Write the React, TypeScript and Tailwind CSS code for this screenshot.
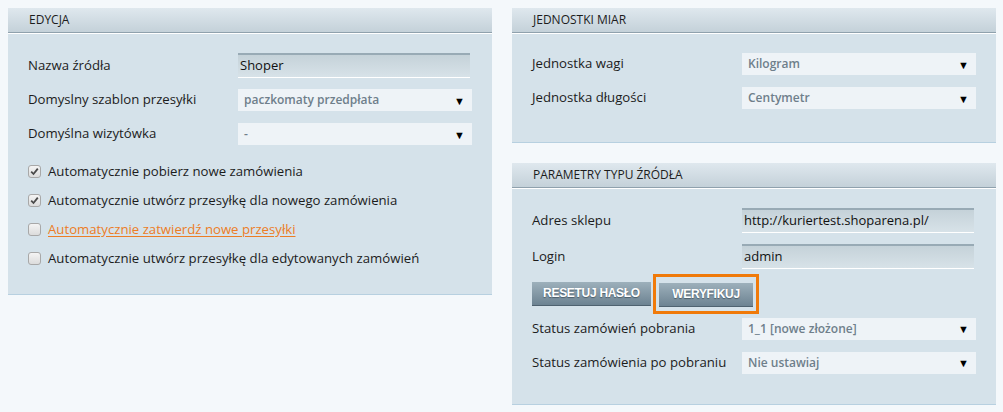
import React from 'react';

const font = { fontFamily: '"Open Sans", "Liberation Sans", sans-serif' };

const Panel: React.FC<{ title: string; className?: string; children: React.ReactNode }> = ({
  title,
  className = '',
  children,
}) => (
  <section className={`bg-[#d5e2ea] border-b border-[#b7d0e0] ${className}`}>
    <div className="h-[25px] flex items-center pl-[21px] bg-gradient-to-b from-[#dfe8ee] to-[#c4d1d9] border-b border-[#8fa1ad] shadow-[0_1px_0_#ffffff]">
      <h2 className="text-[12px] leading-none text-[#1c1c1c] uppercase">{title}</h2>
    </div>
    {children}
  </section>
);

const Row: React.FC<{ label: string; children: React.ReactNode; className?: string }> = ({
  label,
  children,
  className = '',
}) => (
  <div className={`flex items-center ${className}`}>
    <label className="w-[210px] shrink-0 text-[13.2px] text-[#1c1c1c]">{label}</label>
    {children}
  </div>
);

const TextInput: React.FC<{ value: string }> = ({ value }) => (
  <div className="w-[232px] h-[25px] flex items-center pl-[2px] text-[13px] text-[#111] bg-gradient-to-b from-[#c5d2d9] to-[#d7e2e8] border-t-2 border-[#98aab5] border-b border-b-white">
    {value}
  </div>
);

const Select: React.FC<{ value: string }> = ({ value }) => (
  <div className="w-[234px] h-[22px] flex items-center justify-between pl-[6px] pr-[7px] bg-[#eef3f7] text-[12px] font-semibold text-[#6f7f8b]">
    <span>{value}</span>
    <span className="text-[11px] text-black leading-none">▼</span>
  </div>
);

const Checkbox: React.FC<{ checked?: boolean; label: string; link?: boolean }> = ({ checked, label, link }) => (
  <div className="flex items-center h-[29px]">
    <span className="w-[13px] h-[13px] ml-[20px] mr-[7px] rounded-[3px] border border-[#a8a8a8] bg-gradient-to-b from-[#f4f4f4] to-[#dcdcdc] flex items-center justify-center">
      {checked && (
        <svg width="9" height="9" viewBox="0 0 9 9">
          <path d="M1.2 4.6 L3.5 7 L7.8 1.6" fill="none" stroke="#4a4a4a" strokeWidth="1.8" />
        </svg>
      )}
    </span>
    <span
      className={`text-[13.2px] ${link ? 'text-[#ec7d26] underline underline-offset-2' : 'text-[#1c1c1c]'}`}
    >
      {label}
    </span>
  </div>
);

const Button: React.FC<{ children: React.ReactNode; className?: string }> = ({ children, className = '' }) => (
  <button
    className={`h-[24px] whitespace-nowrap font-['Liberation_Sans',sans-serif] text-[12px] tracking-[-0.3px] font-bold text-white uppercase bg-gradient-to-b from-[#9db0bb] to-[#6d8392] border-b border-[#4f6270] [text-shadow:0_1px_1px_#4b5d69] ${className}`}
  >
    {children}
  </button>
);

export default function App() {
  return (
    <div className="min-h-screen bg-[#f4f8fb] pt-[8px] pl-[8px]" style={font}>
      <div className="flex gap-[20px] items-start">
        <Panel title="Edycja" className="w-[484px] h-[287px]">
          <div className="px-[20px] pt-[20px]">
            <Row label="Nazwa źródła">
              <TextInput value="Shoper" />
            </Row>
            <Row label="Domyslny szablon przesyłki" className="mt-[11px]">
              <Select value="paczkomaty przedpłata" />
            </Row>
            <Row label="Domyślna wizytówka" className="mt-[12px]">
              <Select value="-" />
            </Row>
          </div>
          <div className="mt-[12px]">
            <Checkbox checked label="Automatycznie pobierz nowe zamówienia" />
            <Checkbox checked label="Automatycznie utwórz przesyłkę dla nowego zamówienia" />
            <Checkbox link label="Automatycznie zatwierdź nowe przesyłki" />
            <Checkbox label="Automatycznie utwórz przesyłkę dla edytowanych zamówień" />
          </div>
        </Panel>

        <div className="w-[484px] flex flex-col gap-[20px]">
          <Panel title="Jednostki miar" className="h-[135px]">
            <div className="px-[20px] pt-[20px]">
              <Row label="Jednostka wagi">
                <Select value="Kilogram" />
              </Row>
              <Row label="Jednostka długości" className="mt-[12px]">
                <Select value="Centymetr" />
              </Row>
            </div>
          </Panel>

          <Panel title="Parametry typu źródła" className="h-[242px]">
            <div className="px-[20px] pt-[20px]">
              <Row label="Adres sklepu">
                <TextInput value="http://kuriertest.shoparena.pl/" />
              </Row>
              <Row label="Login" className="mt-[11px]">
                <TextInput value="admin" />
              </Row>
              <div className="flex items-center mt-[5px]">
                <Button className="w-[119px]">Resetuj hasło</Button>
                <div className="ml-[2px] border-[3px] border-[#f07a0a] p-[3px] pb-[4px]">
                  <Button className="w-[94px]">Weryfikuj</Button>
                </div>
              </div>
              <Row label="Status zamówień pobrania" className="mt-[4px]">
                <Select value="1_1 [nowe złożone]" />
              </Row>
              <Row label="Status zamówienia po pobraniu" className="mt-[12px]">
                <Select value="Nie ustawiaj" />
              </Row>
            </div>
          </Panel>
        </div>
      </div>
    </div>
  );
}
